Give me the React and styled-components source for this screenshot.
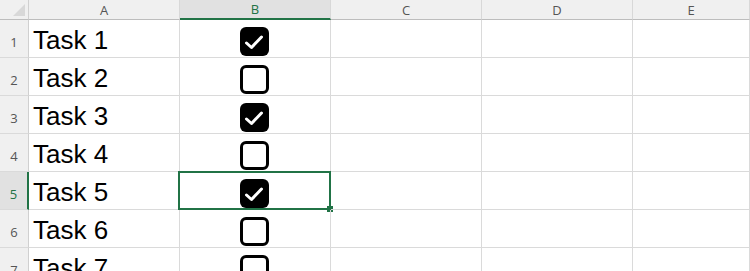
import React from "react";
import styled, { createGlobalStyle, css } from "styled-components";

const GlobalStyle = createGlobalStyle`
  html, body {
    margin: 0;
    padding: 0;
    background: #ffffff;
    overflow: hidden;
  }
`;

const green = "#217346";
const grid = "#dadada";

const Sheet = styled.div`
  display: grid;
  grid-template-columns: 29px repeat(4, 151px) 1fr;
  grid-template-rows: 20px repeat(7, 38px);
  width: 750px;
  height: 271px;
  overflow: hidden;
  font-family: "Liberation Sans", Arial, sans-serif;
`;

const Corner = styled.div`
  position: relative;
  background: #f0f0f0;
  border-right: 1px solid #d0d0d0;
  border-bottom: 1px solid #bdbdbd;

  &::after {
    content: "";
    position: absolute;
    right: 3px;
    bottom: 3px;
    width: 0;
    height: 0;
    border-left: 12px solid transparent;
    border-bottom: 12px solid #d8d8d8;
  }
`;

const ColHead = styled.div`
  display: flex;
  align-items: center;
  justify-content: center;
  font-family: "Open Sans", "Liberation Sans", sans-serif;
  font-size: 13px;
  color: #555;
  background: #f0f0f0;
  border-right: 1px solid #d8d8d8;
  border-bottom: 1px solid #bdbdbd;
  box-sizing: border-box;
  ${(p) =>
    p.$active &&
    css`
      background: #e1e1e1;
      color: ${green};
      border-bottom: 2px solid ${green};
    `}
`;

const RowHead = styled.div`
  display: flex;
  align-items: flex-end;
  justify-content: center;
  padding-bottom: 6px;
  box-sizing: border-box;
  font-family: "Open Sans", "Liberation Sans", sans-serif;
  font-size: 13px;
  color: #555;
  background: #f0f0f0;
  border-right: 1px solid #d0d0d0;
  border-bottom: 1px solid ${grid};
  ${(p) =>
    p.$active &&
    css`
      background: #e1e1e1;
      color: ${green};
      border-right: 2px solid ${green};
    `}
`;

const Cell = styled.div`
  position: relative;
  display: flex;
  align-items: flex-end;
  justify-content: ${(p) => (p.$center ? "center" : "flex-start")};
  box-sizing: border-box;
  padding: 0 0 1px ${(p) => (p.$center ? "0" : "4px")};
  border-right: 1px solid ${grid};
  border-bottom: 1px solid ${grid};
  font-size: 26px;
  line-height: 1.15;
  color: #000;
  ${(p) =>
    p.$selected &&
    css`
      &::before {
        content: "";
        position: absolute;
        left: -2px;
        top: -1px;
        right: -1px;
        bottom: -1px;
        border: 2px solid ${green};
        pointer-events: none;
      }
      &::after {
        content: "";
        position: absolute;
        right: -4px;
        bottom: -4px;
        width: 6px;
        height: 6px;
        background: ${green};
        border: 1px solid #fff;
        border-left: none;
        border-top: none;
      }
    `}
`;

const Box = styled.div`
  width: 29px;
  height: 29px;
  box-sizing: border-box;
  border-radius: 6px;
  margin-right: 2px;
  display: flex;
  align-items: center;
  justify-content: center;
  ${(p) =>
    p.$checked
      ? css`
          background: #000;
        `
      : css`
          background: #fff;
          border: 3px solid #000;
        `}
`;

const Check = () => (
  <svg width="22" height="22" viewBox="0 0 22 22">
    <path
      d="M3.5 12 L8.5 16.5 L18.5 6"
      fill="none"
      stroke="#fff"
      strokeWidth="3"
      strokeLinecap="round"
      strokeLinejoin="round"
    />
  </svg>
);

const Checkbox = ({ checked }) => (
  <Box $checked={checked}>{checked && <Check />}</Box>
);

const columns = ["A", "B", "C", "D", "E"];
const tasks = [
  { name: "Task 1", done: true },
  { name: "Task 2", done: false },
  { name: "Task 3", done: true },
  { name: "Task 4", done: false },
  { name: "Task 5", done: true },
  { name: "Task 6", done: false },
  { name: "Task 7", done: false },
];

export default function App() {
  const activeRow = 5;
  return (
    <>
      <GlobalStyle />
      <Sheet>
        <Corner />
        {columns.map((c) => (
          <ColHead key={c} $active={c === "B"}>
            {c}
          </ColHead>
        ))}
        {tasks.map((t, i) => {
          const row = i + 1;
          return (
            <React.Fragment key={t.name}>
              <RowHead $active={row === activeRow}>{row}</RowHead>
              <Cell>{t.name}</Cell>
              <Cell $center $selected={row === activeRow}>
                <Checkbox checked={t.done} />
              </Cell>
              <Cell />
              <Cell />
              <Cell />
            </React.Fragment>
          );
        })}
      </Sheet>
    </>
  );
}
